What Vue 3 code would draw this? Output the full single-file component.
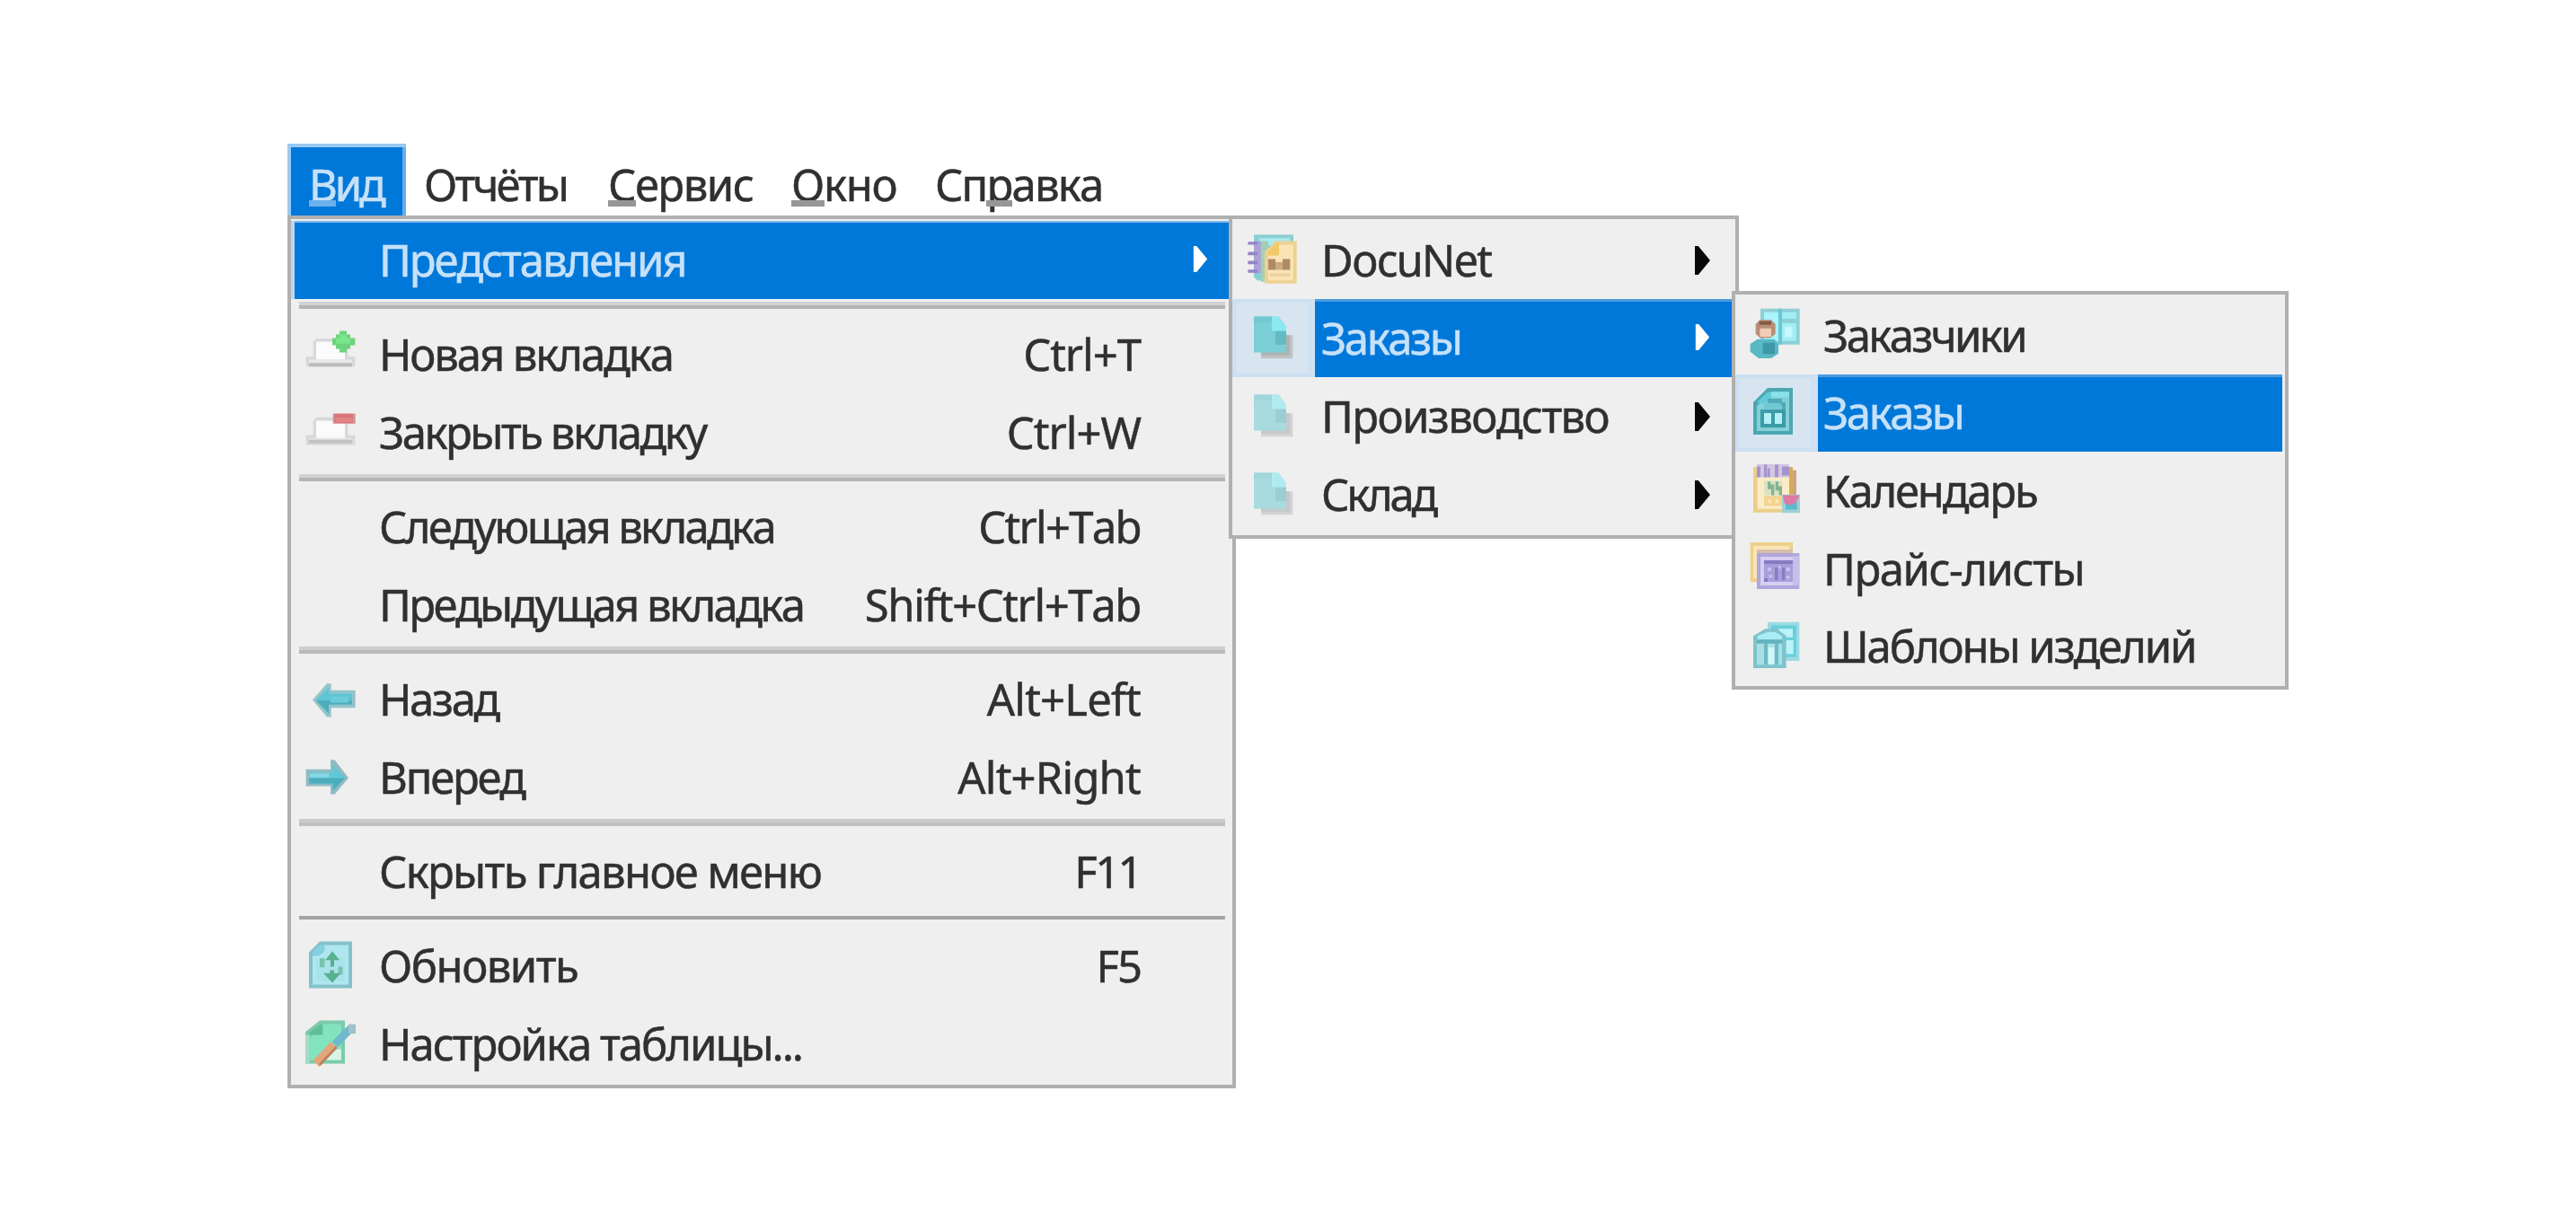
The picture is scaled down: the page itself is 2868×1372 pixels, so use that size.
<script setup>
const bar = [
  { pre: '', key: 'В', post: 'ид', x: 'first', ls: -3.2 },
  { pre: '', key: '', post: 'Отчёты', x: 'reports', ls: -2.8 },
  { pre: '', key: 'С', post: 'ервис', x: 'service', ls: -1.5 },
  { pre: '', key: 'О', post: 'кно', x: 'window', ls: -1.3 },
  { pre: 'Сп', key: 'р', post: 'авка', x: 'help', ls: -1.8 },
]

const viewMenu = [
  { text: 'Представления', ls: -2.1, sub: true, on: true },
  { sep: 'a' },
  { text: 'Новая вкладка', ls: -2.1, icon: 'tabNew', keys: 'Ctrl+T', kls: -1 },
  { text: 'Закрыть вкладку', ls: -2.5, icon: 'tabClose', keys: 'Ctrl+W', kls: -1 },
  { sep: 'a' },
  { text: 'Следующая вкладка', ls: -2.7, keys: 'Ctrl+Tab', kls: -1.7 },
  { text: 'Предыдущая вкладка', ls: -2.6, keys: 'Shift+Ctrl+Tab', kls: -1.4 },
  { sep: 'b' },
  { text: 'Назад', ls: -2.3, icon: 'back', keys: 'Alt+Left', kls: -0.8 },
  { text: 'Вперед', ls: -2.2, icon: 'forward', keys: 'Alt+Right', kls: -0.8 },
  { sep: 'c' },
  { text: 'Скрыть главное меню', ls: -1.7, keys: 'F11', kls: -2.6 },
  { sep: 'd' },
  { text: 'Обновить', ls: -1.5, icon: 'refresh', keys: 'F5', kls: -2 },
  { text: 'Настройка таблицы...', ls: -2, icon: 'setup' },
]

const viewsMenu = [
  { text: 'DocuNet', ls: -1.8, icon: 'docunet', sub: true },
  { text: 'Заказы', ls: -2.4, icon: 'page', sub: true, on: true },
  { text: 'Производство', ls: -1.6, icon: 'page', sub: true },
  { text: 'Склад', ls: -3.2, icon: 'page', sub: true },
]

const ordersMenu = [
  { text: 'Заказчики', ls: -2.6, icon: 'customers' },
  { text: 'Заказы', ls: -2.4, icon: 'orders', on: true },
  { text: 'Календарь', ls: -2.2, icon: 'calendar' },
  { text: 'Прайс-листы', ls: -1.5, icon: 'prices' },
  { text: 'Шаблоны изделий', ls: -2.1, icon: 'templates' },
]

const menus = [
  { name: 'view', items: viewMenu },
  { name: 'views', items: viewsMenu },
  { name: 'orders', items: ordersMenu },
]

const boxes = {
  tabNew: '90 79.5 168 168',
  tabClose: '90 340.5 168 168',
  back: '90 31.5 168 168',
  forward: '90 292.5 168 168',
  refresh: '90 52.5 168 168',
  setup: '90 313.5 168 168',
  docunet: '84 94.5 168 168',
  page: '84 355.5 168 168',
  customers: '324 346 168 168',
  orders: '324 605.7 168 168',
  calendar: '324 865.5 168 168',
  prices: '114 225.3 168 168',
  templates: '114 485 168 168',
}
</script>

<template>
  <main class="screen">
    <nav class="bar">
      <span v-for="b in bar" :key="b.x" class="bar-item" :class="b.x" :style="{ letterSpacing: b.ls + 'px' }">{{ b.pre }}<span v-if="b.key" class="key">{{ b.key }}</span>{{ b.post }}</span>
    </nav>

    <section v-for="m in menus" :key="m.name" class="menu" :class="m.name">
      <template v-for="(it, i) in m.items" :key="i">
        <div v-if="it.sep" class="sep" :class="it.sep"></div>
        <div v-else class="row" :class="{ on: it.on }">
          <span class="cell">
            <svg v-if="it.icon" class="icon" :class="{ faded: it.icon === 'page' && !it.on }" :viewBox="boxes[it.icon]">
              <g v-if="it.icon === 'tabNew'">
                <path d="M92 170h24v-48l10-12h96l10 12v48h24v33H92z" fill="#d8d8d8" />
                <path d="M126 120h96v60h-96z" fill="#fbfbfb" />
                <path d="M102 180h144v10H102z" fill="#e9e9e9" />
                <path d="M102 192h144v11H102z" fill="#bcbcbc" />
                <path d="M204 84h24v12h12v12h16v24h-16v12h-12v12h-24v-12h-12v-12h-12v-24h12V96h12z" fill="#6bd47c" />
                <path d="M204 96h24v12h12v18h-48v-18h12z" fill="#7be58a" />
              </g>
              <g v-else-if="it.icon === 'tabClose'">
                <path d="M92 433h24v-48l10-12h96l10 12v48h24v32H92z" fill="#d8d8d8" />
                <path d="M126 384h96v60h-96z" fill="#fbfbfb" />
                <path d="M102 442h144v8H102z" fill="#e3e3e3" />
                <path d="M102 448h144v12H102z" fill="#c2c2c2" />
                <path d="M182 360h75v34h-75z" fill="#d99093" />
                <path d="M188 361h60v30h-60z" fill="#d8747a" />
                <path d="M192 374h54v14h-54z" fill="#e58488" />
              </g>
              <g v-else-if="it.icon === 'back'">
                <path d="M114 117l48-55h14v23h81v58h-81v31h-14z" fill="#94c4ca" />
                <path d="M126 117l42-42v21h78v36h-78v30z" fill="#5fc4d3" />
                <path d="M126 119h120v13h-78v30z" fill="#4eacbb" />
                <path d="M174 106h60v20h-60z" fill="#6bcbd9" />
              </g>
              <g v-else-if="it.icon === 'forward'">
                <path d="M92 349h82v-32h14l46 60-46 55h-14v-27H92z" fill="#8fbcc3" />
                <path d="M102 360h80v-26l40 44-40 42v-24h-80z" fill="#5fc8d7" />
                <path d="M102 378h120l-40 42v-24h-80z" fill="#4dadbc" />
                <path d="M104 362h66v14h-66z" fill="#84d7e2" />
              </g>
              <g v-else-if="it.icon === 'refresh'">
                <path d="M102 90l36-36h108v156H102z" fill="#84c1cb" />
                <path d="M114 102l36-36h84v132H114z" fill="#b0e7ef" />
                <path d="M114 90l24-24h16v20l-18 16h-22z" fill="#84d0de" />
                <path d="M126 110h96v76h-96z" fill="#a8e2ea" />
                <path d="M180 86l24 30h-18v22h-12v-22h-18z" fill="#58b08f" />
                <path d="M138 110h16v30h-16zM200 138h14v26h-14z" fill="#76c2aa" />
                <path d="M180 192l-30-32h22v-10h14v10h22z" fill="#58b08f" />
              </g>
              <g v-else-if="it.icon === 'setup'">
                <path d="M90 356l48-38h84v144H90z" fill="#7bcbac" />
                <path d="M104 378l46-48h60v120H104z" fill="#84e3bf" />
                <path d="M104 366h44v-36l-12 4-32 24z" fill="#5fbf99" />
                <path d="M90 366h14v96H90z" fill="#a5dcc7" />
                <path d="M160 414h50v36h-50z" fill="#d9f3e9" />
                <path d="M126 462l60-62" stroke="#e2a67d" stroke-width="30" />
                <path d="M138 466l56-60" stroke="#b97f59" stroke-width="8" />
                <path d="M188 398l54-54" stroke="#6fb9cc" stroke-width="26" />
                <path d="M234 330h24v32h-24z" fill="#a2c2cb" />
              </g>
              <g v-else-if="it.icon === 'docunet'">
                <path d="M108 92h132v154H120l-12-12z" fill="#8ccfd3" />
                <path d="M126 104h102v24H126z" fill="#abe9ef" />
                <path d="M132 114h24v136h-24z" fill="#a5d0b0" />
                <path d="M108 114h24v108h-24z" fill="#a9a3d8" />
                <path d="M88 116h32v10H88zM88 150h32v11H88zM88 180h32v11H88zM88 209h32v11H88z" fill="#9385c6" />
                <path d="M144 150l36-36h71v142H144z" fill="#ecd291" />
                <path d="M156 162l36-36h48v119h-84z" fill="#fae4b3" />
                <path d="M154 152l28-32h10v42h-38z" fill="#f0ca69" />
                <path d="M156 174h24v36h-24zM204 174h25v36h-25z" fill="#b08a66" />
                <path d="M180 184h24v26h-24z" fill="#cbab80" />
                <path d="M160 221h68v12h-68z" fill="#eed1a3" />
              </g>
              <g v-else-if="it.icon === 'page'">
                <path d="M132 428h106v78H132z" fill="#bfc3c4" />
                <path d="M132 428h96v68h-96z" fill="#aeb3b3" />
                <path d="M108 366h82l26 34v86H108z" fill="#7ccfd6" />
                <path d="M180 414h36v46h-36z" fill="#65bbc3" />
                <path d="M168 366h20l28 34v14h-48z" fill="#8be9f2" />
                <path d="M108 366h60v20h-60z" fill="#72c8d0" />
              </g>
              <g v-else-if="it.icon === 'customers'">
                <path d="M360 342h131v120H360z" fill="#8fcfd6" />
                <path d="M372 354h48v96h-48z" fill="#a9f3fb" />
                <path d="M432 354h48v22h-48zM432 390h48v60h-48z" fill="#a3edf5" />
                <path d="M420 342h12v120h-12z" fill="#68c8d2" />
                <path d="M442 402h24v36h-24z" fill="#c6f9fd" />
                <path d="M326 460l24-16h56l14 16v32l-24 16h-42l-28-22z" fill="#58b8c4" />
                <path d="M368 456h40v38h-40z" fill="#3f98a6" />
                <path d="M344 394l14-14h38l14 14v32l-16 14h-36l-14-14z" fill="#b98d76" />
                <path d="M356 384h40v12h-40z" fill="#825b44" />
                <path d="M358 408h38v28h-38z" fill="#f2cdb6" />
              </g>
              <g v-else-if="it.icon === 'orders'">
                <path d="M336 654l48-48h84v156H336z" fill="#4ba8b3" />
                <path d="M348 666l48-48h60v132H348z" fill="#86cfd7" />
                <path d="M348 654l36-34h12v22l-24 16z" fill="#62cbd7" />
                <path d="M396 620h60v16h-60z" fill="#86e3ec" />
                <path d="M384 642h48v12h12v24h-12v-12h-48z" fill="#4eaab5" />
                <path d="M372 656h56v20h-56z" fill="#70c8d2" />
                <path d="M360 678h84v60h-84z" fill="#3a9ca6" />
                <path d="M372 690h24v36h-24zM408 690h24v36h-24z" fill="#b4f1f6" />
              </g>
              <g v-else-if="it.icon === 'calendar'">
                <path d="M456 882h24v96h-24z" fill="#c9a58b" />
                <path d="M336 872h132v152H336z" fill="#ebce8a" />
                <path d="M350 886h106v126H350z" fill="#fbecc8" />
                <path d="M456 872h12v92h-12z" fill="#d9ac51" />
                <path d="M348 862h108v44H348z" fill="#d3c7e0" />
                <path d="M348 870h12v36h-12zM372 864h10v42h-10zM384 876h8v30h-8zM408 864h12v42h-12zM432 870h24v30h-24z" fill="#a594d0" />
                <path d="M372 918h60v48h-60z" fill="#d9e3c4" />
                <path d="M384 920h10v10h12v36h-10v-20h-12zM410 920h10v16h12v30h-10v-16h-12z" fill="#84b391" />
                <path d="M372 968h62v34h-62z" fill="#f3d38e" />
                <path d="M386 980h10v12h-10zM410 980h10v12h-10z" fill="#fae8bd" />
                <path d="M432 964h60v61h-60z" fill="#9fcfd4" />
                <path d="M444 990h38v24h-38z" fill="#58bccb" />
                <path d="M434 966h56l-10 24-18 10-22-8z" fill="#dc7ba5" />
              </g>
              <g v-else-if="it.icon === 'prices'">
                <path d="M116 222h142v132H116z" fill="#edd08a" />
                <path d="M126 234h120v108H126z" fill="#f8e4b8" />
                <path d="M138 246h120v12H138z" fill="#d5bda8" />
                <path d="M138 258h142v120H138z" fill="#b0a5dc" />
                <path d="M150 270h108v96H150z" fill="#d6cff1" />
                <path d="M258 268h22v98h-22z" fill="#c6bfe9" />
                <path d="M162 282h96v72h-96z" fill="#a99edb" />
                <path d="M162 282h96v12h-96zM162 342h12v12h-12zM198 306h10v42h-10zM222 306h10v42h-10z" fill="#887bc3" />
                <path d="M174 306h12v12h-12zM210 300h8v10h-8zM236 306h12v12h-12zM178 330h12v10h-12zM236 334h12v10h-12z" fill="#c9c2ed" />
              </g>
              <g v-else>
                <path d="M174 487h106v130H174z" fill="#9bdbe2" />
                <path d="M186 498h84v106h-84z" fill="#69cfdb" />
                <path d="M210 510h48v28h-48zM234 548h26v46h-26z" fill="#baf3f9" />
                <path d="M126 534l40-24h40l30 24v107H126z" fill="#7fc3cc" />
                <path d="M140 534l34-14h24l24 14v12h-82z" fill="#a9edf5" />
                <path d="M138 560h84v70h-84z" fill="#a9e0e6" />
                <path d="M138 546h84v12h-84z" fill="#61b4bf" />
                <path d="M162 558h12v72h-12zM198 558h12v72h-12z" fill="#6cbbc6" />
                <path d="M176 572h20v56h-20z" fill="#cff6fa" />
              </g>
            </svg>
          </span>
          <span class="fill">
            <span class="label" :style="{ letterSpacing: it.ls + 'px' }">{{ it.text }}</span>
            <span v-if="it.keys" class="keys" :style="{ letterSpacing: it.kls + 'px' }">{{ it.keys }}</span>
            <svg v-if="it.sub" class="arrow" viewBox="0 0 18 34"><path d="M0 0h4l14 17L4 34H0z" fill="currentColor" /></svg>
          </span>
        </div>
      </template>
    </section>
  </main>
</template>

<style>
body { background: #fff; }
</style>

<style scoped>
.screen {
  position: relative;
  box-sizing: border-box;
  width: 2868px;
  height: 1372px;
  padding: 160px 0 0 320px;
  overflow: hidden;
  font: 49px/87px "Noto Sans", "Open Sans", sans-serif;
  font-kerning: none;
  color: #303030;
  -webkit-text-stroke: .5px currentColor;
}
.bar { display: flex; height: 80px; white-space: nowrap; }
.bar-item { box-sizing: border-box; height: 80px; line-height: 90px; }
.first {
  width: 132px;
  padding-left: 24px;
  background: #0078d9;
  box-shadow: inset 0 4px #99c9f0, inset 4px 0 #99c9f0, inset -4px 0 #66aee8;
  color: #c6e1f9;
}
.reports { width: 203px; padding-left: 20px; }
.service { width: 205px; padding-left: 22px; }
.window { width: 160px; padding-left: 21px; }
.help { padding-left: 21px; }
.key { position: relative; }
.key::after {
  content: "";
  position: absolute;
  left: 0;
  right: -1px;
  bottom: 8px;
  height: 7px;
  background: #969696;
}
.first .key::after { background: #6cb1ea; }

.menu {
  position: absolute;
  box-sizing: border-box;
  border: 4px solid #b0b0b0;
  background: #efefef;
}
.view { left: 320px; top: 240px; width: 1056px; height: 972px; padding-top: 2px; }
.views { left: 1368px; top: 240px; width: 568px; height: 360px; padding-top: 2px; }
.orders { left: 1928px; top: 324px; width: 620px; height: 444px; padding-top: 2px; }

.row { display: flex; height: 87px; }
.orders .row { height: 86.6px; }
.cell { box-sizing: border-box; display: flex; align-items: center; flex: none; }
.view .cell { width: 80px; padding-left: 16px; }
.views .cell { width: 92px; padding-left: 16px; }
.orders .cell { width: 92px; padding-left: 16px; }
.icon { width: 56px; height: 56px; overflow: visible; }
.faded { opacity: .62; }

.fill { display: flex; flex: 1; align-items: center; position: relative; white-space: pre; }
.view .fill { padding: 0 102px 0 18px; }
.views .fill, .orders .fill { padding-left: 7px; }
.orders .fill { padding-left: 6px; }
.label { flex: 1; }
.arrow { position: absolute; width: 17px; height: 32px; top: 28px; color: #080808; }
.view .arrow { right: 27px; }
.views .arrow { right: 28px; }

.on .fill { color: #c6e1f9; }
.on .arrow { color: #fff; height: 29px; }
.view .on { background: #0078d9; box-shadow: inset 4px 0 #b8d8f2, inset 0 2px #7fb9ea; }
.views .on .fill, .orders .on .fill { background: #0078d9; box-shadow: inset 0 3px #4a9ce0; }
.orders .on .fill { margin-right: 3px; }
.views .on .cell, .orders .on .cell {
  border: 4px solid #cce0f3;
  border-right: 8px solid #cfe1f2;
  padding-left: 12px;
  background: #d8e5f1;
}

.sep { box-sizing: border-box; height: 18px; padding: 3px 8px 0 9px; }
.sep::before { content: ""; display: block; height: 4px; background: #d2d2d2; border-bottom: 4px solid #b5b5b5; }
.sep.b::before { background: #cdcdcd; border-color: #b9b9b9; }
.sep.c::before { background: #c9c9c9; border-color: #c0c0c0; }
.sep.d { padding-top: 6px; }
.sep.d::before { background: #a4a4a4; border: 0; }
</style>
